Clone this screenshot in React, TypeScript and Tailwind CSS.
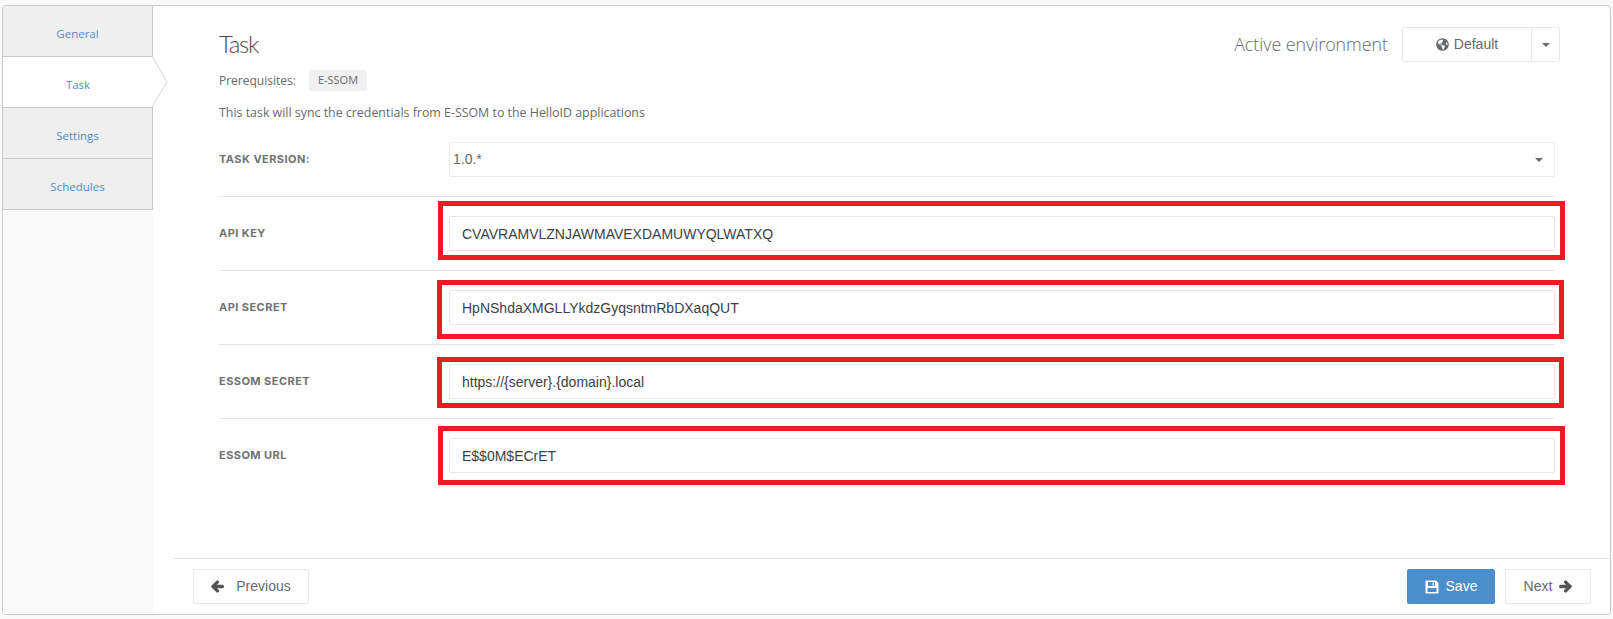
import { FaArrowLeft, FaArrowRight, FaGlobeAmericas } from "react-icons/fa";

const tabs = ["General", "Task", "Settings", "Schedules"];

const fields = [
  { label: "API KEY", value: "CVAVRAMVLZNJAWMAVEXDAMUWYQLWATXQ", red: "-top-[15px] -bottom-[9px] -left-[11px] -right-[10px]" },
  { label: "API SECRET", value: "HpNShdaXMGLLYkdzGyqsntmRbDXaqQUT", red: "-top-[10px] -bottom-[14px] -left-[12px] -right-[9px]" },
  { label: "ESSOM SECRET", value: "https://{server}.{domain}.local", red: "-top-[7px] -bottom-[9px] -left-[12px] -right-[9px]" },
  { label: "ESSOM URL", value: "E$$0M$ECrET", red: "-top-[12px] -bottom-[12px] -left-[11px] -right-[10px]" },
];

function Caret() {
  return <span className="block h-0 w-0 border-x-[4px] border-t-[4px] border-x-transparent border-t-[#676a6c]" />;
}

function SaveIcon() {
  return (
    <svg width="14" height="14" viewBox="0 0 14 14" fill="currentColor">
      <path
        fillRule="evenodd"
        d="M0.5 0.5H11L13.5 3V13.5H0.5ZM3 2V6H10V2ZM2.5 8V12H11.5V8ZM7.5 2.5H9V5.5H7.5Z"
      />
    </svg>
  );
}

function Sidebar() {
  return (
    <aside className="flex w-[150px] flex-none flex-col bg-[#fafafa]">
      {tabs.map((tab) => {
        const active = tab === "Task";
        return (
          <div
            key={tab}
            className={
              active
                ? "relative flex h-[51px] items-center justify-center border-b border-[#c8c8c8] bg-white pt-[5px] text-[11.5px] text-[#4d8cc9]"
                : "flex h-[51px] items-center justify-center border-r border-b border-[#c8c8c8] bg-[#efefef] pt-[5px] text-[11.5px] text-[#4d8cc9]"
            }
          >
            {tab}
            {active && (
              <svg className="absolute -top-px left-[149px] h-[52px] w-[16px]" viewBox="0 0 16 52">
                <path d="M0 0 L15 26 L0 51" fill="#fff" stroke="#d4d4d4" strokeWidth="1" />
              </svg>
            )}
          </div>
        );
      })}
    </aside>
  );
}

function Field({ label, value, red }: { label: string; value: string; red: string }) {
  return (
    <div className="flex h-[74px] items-center border-t border-[#e4e4e4]">
      <label className="w-[230px] flex-none font-['Inter',sans-serif] text-[11px] font-bold tracking-[0.45px] text-[#707274]">
        {label}
      </label>
      <div className="relative grow">
        <input
          readOnly
          value={value}
          className="block h-[35px] w-full rounded-[2px] border border-[#e5e6e7] bg-white px-[12px] font-['Liberation_Sans',sans-serif] text-[14px] text-[#3c3f44] outline-none"
        />
        <div className={`pointer-events-none absolute border-[5px] border-[#ed1c24] ${red}`} />
      </div>
    </div>
  );
}

export default function App() {
  return (
    <div className="h-[619px] bg-[#f9f9f9] px-[2px] pt-[5px] pb-[4px] font-['Open_Sans',sans-serif] text-[12px] text-[#676a6c]">
      <div className="flex h-full overflow-hidden rounded-[4px] border border-[#cbcbcb] bg-white">
        <Sidebar />
        <main className="flex min-w-0 grow flex-col">
          <div className="grow pr-[55px] pl-[66px]">
            <header className="flex items-start justify-between pt-[21px]">
              <h1 className="mt-[1px] h-[31px] font-['Lato',sans-serif] text-[24px] leading-[32px] font-light tracking-[-1.3px] text-[#4a4a4a]">
                Task
              </h1>
              <div className="-mr-[5px] flex items-center">
                <span className="mr-[14px] text-[17.8px] font-light text-[#676a6c]">Active environment</span>
                <div className="flex h-[35px] w-[158px] rounded-[2px] border border-[#e8e8e8] font-['Liberation_Sans',sans-serif] text-[14px]">
                  <span className="flex grow items-center justify-center gap-[5px] border-r border-[#e8e8e8]">
                    <FaGlobeAmericas size={13} />
                    Default
                  </span>
                  <span className="flex w-[27px] items-center justify-center">
                    <Caret />
                  </span>
                </div>
              </div>
            </header>

            <div className="mt-[8px] flex items-center">
              <span className="text-[12px]">Prerequisites:</span>
              <span className="ml-[13px] flex h-[21px] items-center rounded-[3px] bg-[#f0f0f0] px-[9px] text-[11px]">
                E-SSOM
              </span>
            </div>
            <p className="mt-[12px] text-[12.4px] leading-[20px]">
              This task will sync the credentials from E-SSOM to the HelloID applications
            </p>

            <div className="mt-[19px] flex items-center pb-[19px]">
              <label className="w-[230px] flex-none font-['Inter',sans-serif] text-[11px] font-bold tracking-[0.45px] text-[#707274]">
                TASK VERSION:
              </label>
              <div className="flex h-[35px] grow items-center justify-between rounded-[2px] border border-[#ececec] pr-[11px] pl-[3px] font-['Liberation_Sans',sans-serif] text-[14px]">
                1.0.*
                <Caret />
              </div>
            </div>

            {fields.map((field) => (
              <Field key={field.label} {...field} />
            ))}
          </div>

          <footer className="ml-[20px] flex h-[56px] flex-none items-start justify-between border-t border-[#e4e4e4] pt-[10px] pr-[19px] pl-[20px] font-['Liberation_Sans',sans-serif] text-[14px]">
            <button className="flex h-[35px] w-[116px] items-center justify-center gap-[12px] rounded-[2px] border border-[#e8e8e8]">
              <FaArrowLeft size={13} stroke="currentColor" strokeWidth={50} className="text-[#555]" />
              Previous
            </button>
            <div className="flex gap-[10px]">
              <button className="flex h-[35px] w-[88px] items-center justify-center gap-[7px] rounded-[2px] bg-[#4a8ecb] text-white">
                <SaveIcon />
                Save
              </button>
              <button className="flex h-[35px] w-[86px] items-center justify-center gap-[7px] rounded-[2px] border border-[#e8e8e8]">
                Next
                <FaArrowRight size={13} stroke="currentColor" strokeWidth={50} className="text-[#555]" />
              </button>
            </div>
          </footer>
        </main>
      </div>
    </div>
  );
}
